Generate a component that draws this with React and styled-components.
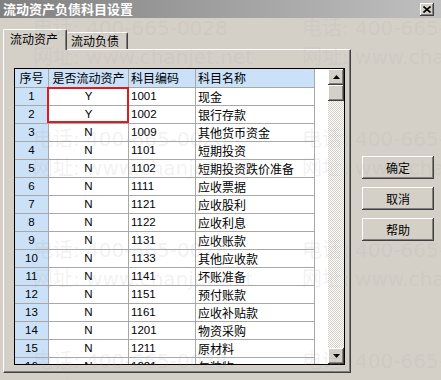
import styled, { createGlobalStyle } from "styled-components";

const GlobalStyle = createGlobalStyle`
  html, body {
    margin: 0;
    padding: 0;
    background: #d4d0c8;
  }
  body {
    font-family: "Liberation Sans", "Noto Sans CJK SC", sans-serif;
    font-size: 12px;
    color: #000;
  }
`;

const raised = `
  background: #d4d0c8;
  box-shadow: inset -1px -1px #404040, inset 1px 1px #ffffff,
    inset -2px -2px #808080, inset 2px 2px #d4d0c8;
`;

const Window = styled.div`
  position: relative;
  width: 441px;
  height: 380px;
  background: #d4d0c8;
  display: flex;
  flex-direction: column;
  overflow: hidden;
`;

const TitleBar = styled.div`
  height: 18px;
  flex: none;
  display: flex;
  align-items: center;
  justify-content: space-between;
  padding: 0 7px 0 3px;
  background: linear-gradient(to right, #808080, #c0c0c0);
`;

const Title = styled.span`
  color: #ffffff;
  font-family: "Noto Sans CJK SC", sans-serif;
  font-weight: bold;
  font-size: 13px;
  line-height: 18px;
`;

const CloseButton = styled.div`
  ${raised}
  width: 14px;
  height: 13px;
  display: flex;
  align-items: center;
  justify-content: center;
`;

const Body = styled.div`
  flex: 1;
  display: flex;
  padding: 11px 0 0 3px;
`;

const TabArea = styled.div`
  width: 348px;
  display: flex;
  flex-direction: column;
`;

const TabStrip = styled.div`
  height: 20px;
  display: flex;
  align-items: flex-end;
  position: relative;
  z-index: 1;
`;

const Tab = styled.div`
  box-sizing: border-box;
  width: ${(p) => (p.$active ? "64px" : "61px")};
  height: ${(p) => (p.$active ? "21px" : "17px")};
  margin-bottom: ${(p) => (p.$active ? "-1px" : "0")};
  background: #d4d0c8;
  border-top: 1px solid #ffffff;
  border-left: ${(p) => (p.$active ? "1px solid #ffffff" : "none")};
  border-right: 1px solid #404040;
  box-shadow: inset -1px 0 #808080;
  border-radius: 2px 2px 0 0;
  font-family: "Noto Sans CJK SC", sans-serif;
  font-size: 12px;
  line-height: ${(p) => (p.$active ? "18px" : "16px")};
  padding-left: ${(p) => (p.$active ? "6px" : "4px")};
  white-space: nowrap;
`;

const Panel = styled.div`
  box-sizing: border-box;
  width: 348px;
  height: 324px;
  border-top: 1px solid #ffffff;
  border-left: 1px solid #ffffff;
  border-right: 1px solid #404040;
  border-bottom: 1px solid #404040;
  box-shadow: inset -1px -1px #808080;
  padding: 18px 0 0 10px;
`;

const Grid = styled.div`
  box-sizing: border-box;
  width: 331px;
  height: 297px;
  border: 1px solid #000000;
  background: #ffffff;
  display: flex;
  overflow: hidden;
`;

const Table = styled.div`
  position: relative;
  width: 300px;
  flex: none;
  display: flex;
  flex-direction: column;
`;

const Row = styled.div`
  display: grid;
  grid-template-columns: 34px 80px 67px 119px;
  flex: none;
`;

const Cell = styled.div`
  box-sizing: border-box;
  height: ${(p) => (p.$head ? "19px" : "18px")};
  border-right: 1px solid #a8a8a8;
  border-bottom: 1px solid #a8a8a8;
  background: ${(p) => (p.$blue ? "#cae1f8" : "#ffffff")};
  text-align: ${(p) => (p.$center ? "center" : "left")};
  padding-left: ${(p) => (p.$center ? "0" : "2px")};
  font-family: ${(p) =>
    p.$cjk ? '"Noto Sans CJK SC", sans-serif' : '"Liberation Sans", "Noto Sans CJK SC", sans-serif'};
  font-size: ${(p) => (p.$cjk ? "12px" : "11.5px")};
  line-height: ${(p) => (p.$head ? "18px" : "17px")};
  white-space: nowrap;
  overflow: hidden;
`;

const Highlight = styled.div`
  position: absolute;
  left: 32px;
  top: 18px;
  width: 82px;
  height: 36px;
  box-sizing: border-box;
  border: 2px solid #d81e1e;
  pointer-events: none;
`;

const Blank = styled.div`
  flex: 1;
`;

const ScrollBar = styled.div`
  width: 16px;
  flex: none;
  display: flex;
  flex-direction: column;
`;

const ScrollButton = styled.div`
  ${raised}
  height: 16px;
  flex: none;
  display: flex;
  align-items: center;
  justify-content: center;
`;

const Thumb = styled.div`
  ${raised}
  height: 16px;
  flex: none;
`;

const Track = styled.div`
  flex: 1;
  background: repeating-conic-gradient(#d4d0c8 0% 25%, #ffffff 0% 50%) 0 0 / 2px 2px;
`;

const ButtonColumn = styled.div`
  display: flex;
  flex-direction: column;
  gap: 8px;
  padding: 127px 0 0 11px;
`;

const Button = styled.div`
  ${raised}
  width: 72px;
  height: 23px;
  display: flex;
  align-items: center;
  justify-content: center;
  font-family: "Noto Sans CJK SC", sans-serif;
  font-size: 12px;
`;

const Watermark = styled.div`
  position: absolute;
  inset: 0;
  z-index: 5;
  pointer-events: none;
  display: grid;
  grid-template-columns: repeat(2, 269px);
  grid-auto-rows: 111px;
  padding: 14px 0 0 33px;
`;

const Mark = styled.div`
  font-family: "DejaVu Sans", "Noto Sans CJK SC", sans-serif;
  font-size: 20px;
  line-height: 29px;
  color: rgba(170, 170, 170, 0.16);
  white-space: nowrap;
`;

const rows = [
  ["1", "Y", "1001", "现金"],
  ["2", "Y", "1002", "银行存款"],
  ["3", "N", "1009", "其他货币资金"],
  ["4", "N", "1101", "短期投资"],
  ["5", "N", "1102", "短期投资跌价准备"],
  ["6", "N", "1111", "应收票据"],
  ["7", "N", "1121", "应收股利"],
  ["8", "N", "1122", "应收利息"],
  ["9", "N", "1131", "应收账款"],
  ["10", "N", "1133", "其他应收款"],
  ["11", "N", "1141", "坏账准备"],
  ["12", "N", "1151", "预付账款"],
  ["13", "N", "1161", "应收补贴款"],
  ["14", "N", "1201", "物资采购"],
  ["15", "N", "1211", "原材料"],
  ["16", "N", "1221", "包装物"],
];

function Arrow({ down }) {
  return (
    <svg width="7" height="4" viewBox="0 0 7 4">
      <path d={down ? "M0 0H7L3.5 4Z" : "M3.5 0L7 4H0Z"} fill="#000" />
    </svg>
  );
}

export default function App() {
  return (
    <>
      <GlobalStyle />
      <Window>
        <TitleBar>
          <Title>流动资产负债科目设置</Title>
          <CloseButton>
            <svg width="8" height="7" viewBox="0 0 8 7">
              <path d="M0.5 0.5L7.5 6.5M7.5 0.5L0.5 6.5" stroke="#000" strokeWidth="1.6" />
            </svg>
          </CloseButton>
        </TitleBar>
        <Body>
          <TabArea>
            <TabStrip>
              <Tab $active>流动资产</Tab>
              <Tab>流动负债</Tab>
            </TabStrip>
            <Panel>
              <Grid>
                <Table>
                  <Row>
                    <Cell $head $blue $center $cjk>序号</Cell>
                    <Cell $head $blue $center $cjk>是否流动资产</Cell>
                    <Cell $head $blue $cjk>科目编码</Cell>
                    <Cell $head $blue $cjk>科目名称</Cell>
                  </Row>
                  {rows.map(([no, flag, code, name]) => (
                    <Row key={no}>
                      <Cell $blue $center>{no}</Cell>
                      <Cell $center>{flag}</Cell>
                      <Cell>{code}</Cell>
                      <Cell $cjk>{name}</Cell>
                    </Row>
                  ))}
                  <Highlight />
                </Table>
                <Blank />
                <ScrollBar>
                  <ScrollButton>
                    <Arrow />
                  </ScrollButton>
                  <Thumb />
                  <Track />
                  <ScrollButton>
                    <Arrow down />
                  </ScrollButton>
                </ScrollBar>
              </Grid>
            </Panel>
          </TabArea>
          <ButtonColumn>
            <Button>确定</Button>
            <Button>取消</Button>
            <Button>帮助</Button>
          </ButtonColumn>
        </Body>
        <Watermark>
          {Array.from({ length: 8 }, (_, i) => (
            <div key={i}>
              <Mark>电话: 400-665-0028</Mark>
              <Mark>网址: www.chanjet.net</Mark>
            </div>
          ))}
        </Watermark>
      </Window>
    </>
  );
}
